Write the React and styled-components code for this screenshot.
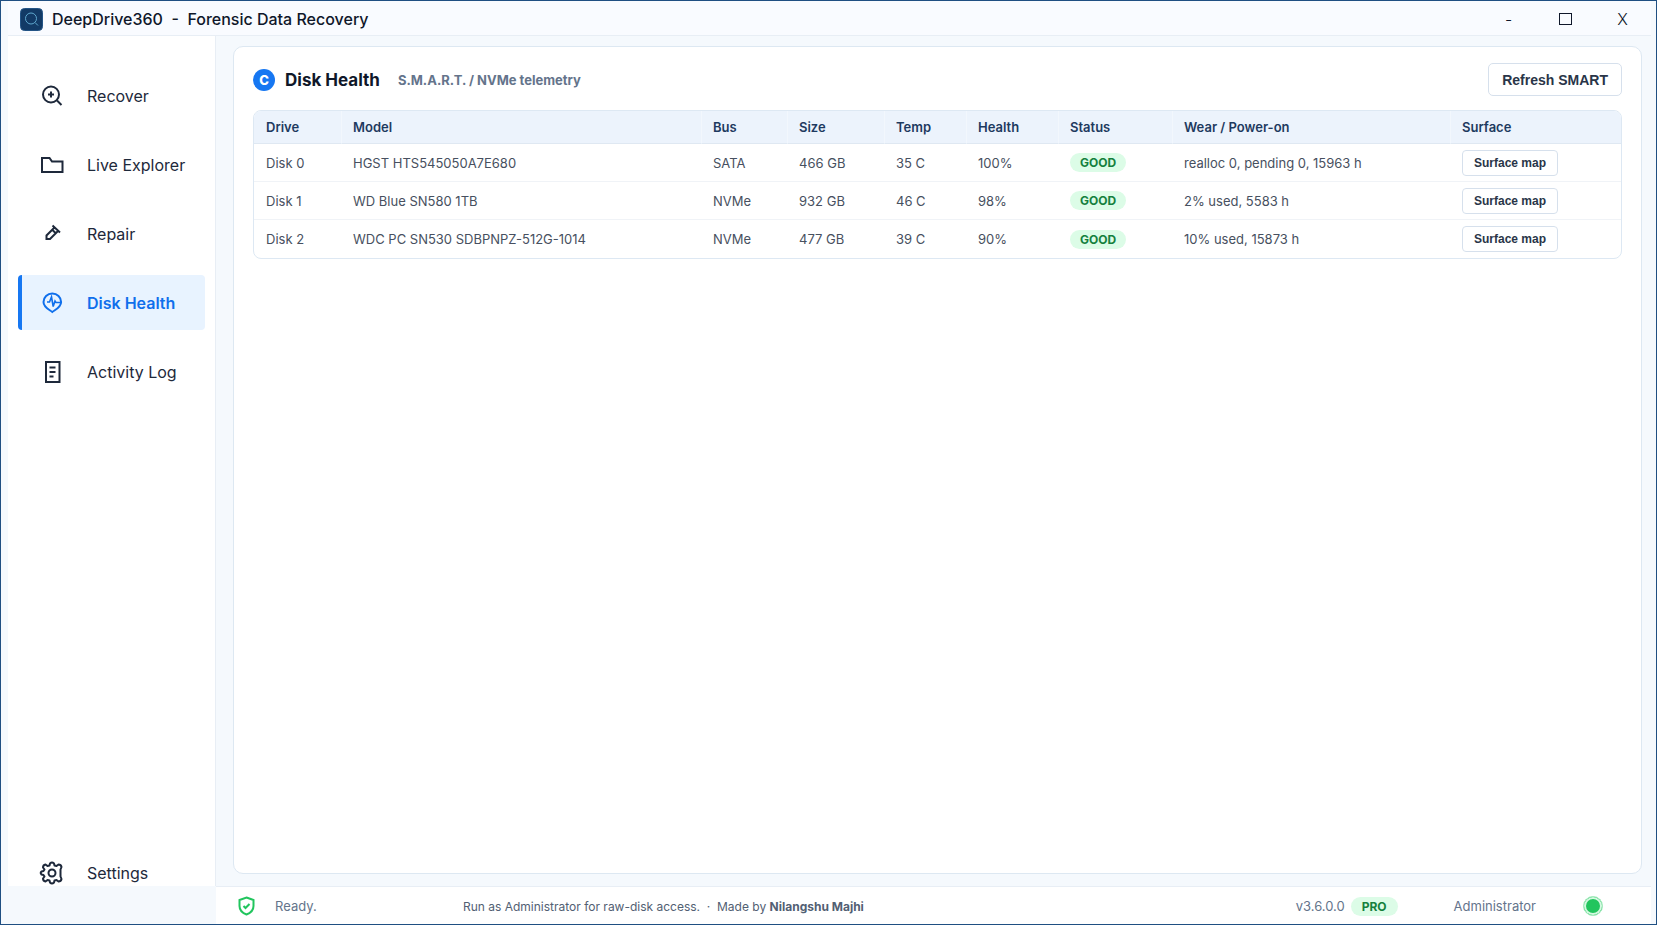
import React from 'react';
import styled, { createGlobalStyle } from 'styled-components';

const Global = createGlobalStyle`
  *, *::before, *::after { box-sizing: border-box; }
  body { margin: 0; font-family: Inter, "Liberation Sans", sans-serif; color: #0f172a; }
  button { font: inherit; color: inherit; cursor: pointer; }
`;

const Window = styled.div`
  height: 100vh;
  display: flex;
  flex-direction: column;
  padding: 0 5px 0 7px;
  border: 1px solid #1f4f82;
  background: #f5f9fd;
  overflow: hidden;
`;

const TitleBar = styled.header`
  height: 35px;
  flex: none;
  display: flex;
  align-items: center;
  gap: 9px;
  padding: 2px 0 0 12px;
  background: #f9fbff;
  border-bottom: 1px solid #e8eef5;
`;

const AppTitle = styled.span`
  flex: 1;
  font-size: 16px;
  line-height: 24px;
  font-weight: 500;
  white-space: pre;
`;

const WindowControls = styled.div`
  display: flex;
`;

const WindowButton = styled.button`
  width: 57px;
  height: 32px;
  display: grid;
  place-items: center;
  padding: 0;
  border: 0;
  background: none;
  font-size: 16px;
  font-weight: 300;
`;

const Body = styled.div`
  flex: 1;
  min-height: 0;
  display: flex;
`;

const Sidebar = styled.nav`
  width: 208px;
  flex: none;
  display: flex;
  flex-direction: column;
  gap: 14px;
  margin-bottom: 38px;
  padding: 32px 10px 0;
  background: #fff;
  border-right: 1px solid #e8eef5;
`;

const NavItem = styled.button`
  height: ${p => (p.$compact ? 27 : 55)}px;
  margin-top: ${p => (p.$compact ? 'auto' : '0')};
  flex: none;
  display: flex;
  align-items: center;
  gap: 24px;
  padding: 0 0 0 19px;
  border: 0;
  border-left: 4px solid ${p => (p.$active ? '#1677f2' : 'transparent')};
  border-radius: 4px;
  background: ${p => (p.$active ? '#e8f3ff' : 'none')};
  color: ${p => (p.$active ? '#0f6fec' : '#1e293b')};
  font-size: 16px;
  font-weight: ${p => (p.$active ? 600 : 400)};
  text-align: left;
  white-space: nowrap;
`;

const Icon = styled.svg`
  flex: none;
  display: block;
  overflow: visible;
  fill: none;
  stroke: ${p => p.$color || 'currentColor'};
  stroke-width: 2;
`;

const Content = styled.div`
  flex: 1;
  min-width: 0;
  display: flex;
  flex-direction: column;
`;

const Card = styled.main`
  flex: 1;
  margin: 10px 9px 12px 17px;
  padding: 16px 19px;
  background: #fff;
  border: 1px solid #dde8f2;
  border-radius: 10px;
`;

const CardHead = styled.div`
  display: flex;
  align-items: center;
  height: 33px;
  margin-bottom: 14px;
`;

const Letter = styled.span`
  width: 22px;
  height: 22px;
  display: grid;
  place-items: center;
  margin-right: 10px;
  border-radius: 50%;
  background: #1677f2;
  color: #fff;
  font-size: 13px;
  font-weight: 800;
`;

const Heading = styled.h1`
  margin: 0 18px 0 0;
  font-size: 17px;
  line-height: 24px;
  font-weight: 700;
`;

const Subtitle = styled.span`
  flex: 1;
  color: #64748b;
  font-size: 13px;
  font-weight: 700;
`;

const OutlineButton = styled.button`
  height: ${p => (p.$small ? 26 : 33)}px;
  padding: 0 ${p => (p.$small ? 11 : 13)}px;
  border: 1px solid #d6e0ec;
  border-radius: ${p => (p.$small ? 4 : 5)}px;
  background: #fff;
  color: #293548;
  font-family: "Liberation Sans", Arial, sans-serif;
  font-size: ${p => (p.$small ? 12 : 14)}px;
  font-weight: 700;
  white-space: nowrap;
`;

const TableFrame = styled.div`
  border: 1px solid #dde8f3;
  border-radius: 8px;
  overflow: hidden;
`;

const Table = styled.table`
  width: 100%;
  table-layout: fixed;
  border-collapse: separate;
  border-spacing: 0;
  font-size: 13px;
`;

const Th = styled.th`
  width: ${p => p.$width};
  height: 33px;
  padding: 0 12px;
  background: #ecf3fc;
  border-bottom: 1px solid #dfe8f2;
  color: #1e3a5f;
  font-weight: 600;
  text-align: left;
  white-space: nowrap;
  & + & { padding-left: 11px; border-left: 1px solid #f2f7fd; }
`;

const Td = styled.td`
  height: 38px;
  padding: 0 12px;
  border-bottom: 1px solid #f0f3f7;
  color: #475060;
  font-weight: 400;
  white-space: nowrap;
  tr:last-child > & { border-bottom: 0; }
`;

const Badge = styled.span`
  height: 19px;
  display: inline-flex;
  align-items: center;
  padding: 0 ${p => p.$pad}px;
  border-radius: 10px;
  background: #dcfce7;
  color: #15803d;
  font-size: 12px;
  font-weight: 700;
  vertical-align: middle;
`;

const StatusBar = styled.footer`
  height: 38px;
  flex: none;
  display: flex;
  align-items: center;
  padding: 1px 48px 0 22px;
  background: #fff;
  border-top: 1px solid #e8eef5;
  color: #64748b;
  font-size: 13px;
  white-space: nowrap;
`;

const Ready = styled.span`
  width: 188px;
  margin-left: 20px;
`;

const Notice = styled.span`
  flex: 1;
  white-space: pre;
  color: #526073;
  font-size: 12px;
`;

const Version = styled.span`
  margin-right: 6px;
`;

const Role = styled.span`
  margin: 0 47px 0 56px;
`;

const Dot = styled.span`
  width: 20px;
  height: 20px;
  border: 1px solid #a9ecc1;
  border-radius: 50%;
  background: #22c55e;
  box-shadow: inset 0 0 0 2px #d3f9e0;
`;

const nav = [
  ['Recover', <><circle cx="10" cy="9.500" r="8" /><path d="M16 15.500l4.500 4.500M10 6.500v6M7 9.500h6" /></>],
  ['Live Explorer', <path d="M1 4h7.500l2.500 3.500h10.500v10.500H1z" />],
  ['Repair', <path d="M11.500 2.500l7.500 7M13.500 4.500L5.500 12.500v3.500h3.500L17 8M11.500 7l3.500 3.500" />],
  ['Disk Health', <><path d="M11.300 20C8.500 17.800 2.500 15.500 2.500 10a8.800 8.500 0 0 1 17.600 0c0 5.500-6 7.800-8.800 10z" /><path d="M6 10h2.500l2-5 1.700 9.500 1.800-5.500 1 1.500h4.500" strokeWidth="1.600" /></>],
  ['Activity Log', <><path d="M5 1h13.500v20H5z" /><path d="M8.500 6.500h6M8.500 11h6M8.500 15.500h4" /></>],
];

const columns = [
  ['Drive', '87px'], ['Model', 'auto'], ['Bus', '86px'], ['Size', '97px'], ['Temp', '82px'],
  ['Health', '92px'], ['Status', '114px'], ['Wear / Power-on', '278px'], ['Surface', '171px'],
];

const disks = [
  ['Disk 0', 'HGST HTS545050A7E680', 'SATA', '466 GB', '35 C', '100%', 'GOOD', 'realloc 0, pending 0, 15963 h'],
  ['Disk 1', 'WD Blue SN580 1TB', 'NVMe', '932 GB', '46 C', '98%', 'GOOD', '2% used, 5583 h'],
  ['Disk 2', 'WDC PC SN530 SDBPNPZ-512G-1014', 'NVMe', '477 GB', '39 C', '90%', 'GOOD', '10% used, 15873 h'],
];

export default function App() {
  return (
    <>
      <Global />
      <Window>
        <TitleBar>
          <Icon width="23" height="23" viewBox="0 0 23 23">
            <rect x=".5" y=".5" width="22" height="22" rx="4" fill="#123a66" stroke="#235486" strokeWidth="1" />
            <g stroke="#5fa8cf" strokeWidth="1"><circle cx="11" cy="10.500" r="5.500" /><path d="M15 14.500l3 3" /></g>
          </Icon>
          <AppTitle>{'DeepDrive360  -  Forensic Data Recovery'}</AppTitle>
          <WindowControls>
            <WindowButton aria-label="Minimize">-</WindowButton>
            <WindowButton aria-label="Maximize">
              <Icon width="13" height="14" viewBox="0 0 13 14"><rect x=".5" y="1.500" width="12" height="11" strokeWidth="1" /></Icon>
            </WindowButton>
            <WindowButton aria-label="Close">X</WindowButton>
          </WindowControls>
        </TitleBar>
        <Body>
          <Sidebar>
            {nav.map(([label, art]) => (
              <NavItem key={label} $active={label === 'Disk Health'}>
                <Icon width="22" height="22" viewBox="0 0 22 22">{art}</Icon>
                {label}
              </NavItem>
            ))}
            <NavItem $compact>
              <Icon width="22" height="24" viewBox="0 0 22 24">
                <circle cx="11" cy="12" r="3.500" />
                <path strokeLinejoin="round" d="M9 2.500Q11 .5 13 2.500L13.500 4.500L15.500 5L17.500 3.500Q20 3.500 20.500 6L19.500 8.500V15.500L20.500 18Q20 20.500 17.500 20.500L15.500 19L13.500 19.500L13 21.500Q11 23.500 9 21.500L8.500 19.500L6.500 19L4.500 20.500Q2 20 2 17.500L3.500 15.500L2.500 14L.5 13.500Q-1 12 .5 10.500L2.500 10L3.500 8.500L2 6.500Q2 4 4.500 3.500L6.500 5L8.500 4.500Z" />
              </Icon>
              Settings
            </NavItem>
          </Sidebar>
          <Content>
            <Card>
              <CardHead>
                <Letter>C</Letter>
                <Heading>Disk Health</Heading>
                <Subtitle>S.M.A.R.T. / NVMe telemetry</Subtitle>
                <OutlineButton>Refresh SMART</OutlineButton>
              </CardHead>
              <TableFrame>
                <Table>
                  <thead>
                    <tr>{columns.map(([name, width]) => <Th key={name} $width={width}>{name}</Th>)}</tr>
                  </thead>
                  <tbody>
                    {disks.map(disk => (
                      <tr key={disk[0]}>
                        {disk.map((value, i) => (
                          <Td key={i}>{i === 6 ? <Badge $pad={10}>{value}</Badge> : value}</Td>
                        ))}
                        <Td><OutlineButton $small>Surface map</OutlineButton></Td>
                      </tr>
                    ))}
                  </tbody>
                </Table>
              </TableFrame>
            </Card>
            <StatusBar>
              <Icon $color="#22c55e" width="17" height="20" viewBox="0 0 17 20">
                <path d="M8.500 1.500L15.500 4v6c0 4-3 7-7 8.500C4.500 17 1.500 14 1.500 10V4z" /><path d="M5.500 10l2 2 4-4" />
              </Icon>
              <Ready>Ready.</Ready>
              <Notice>{'Run as Administrator for raw-disk access.  ·  Made by '}<b>Nilangshu Majhi</b></Notice>
              <Version>v3.6.0.0</Version>
              <Badge $pad={11}>PRO</Badge>
              <Role>Administrator</Role>
              <Dot />
            </StatusBar>
          </Content>
        </Body>
      </Window>
    </>
  );
}
